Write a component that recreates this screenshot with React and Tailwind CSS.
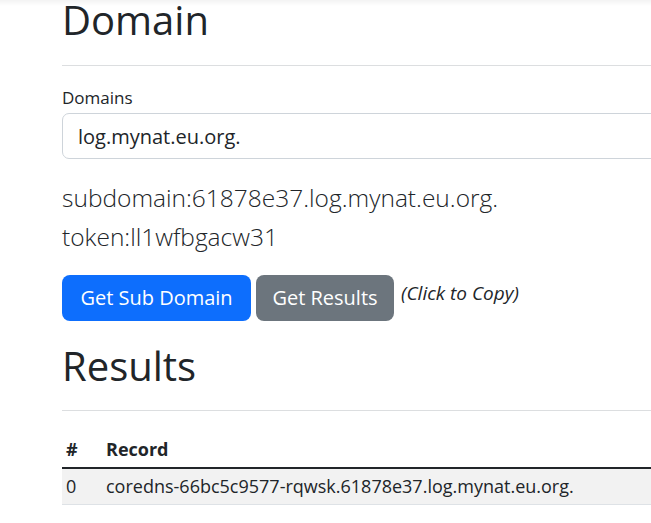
import React from 'react';

const records = [
  { id: 0, value: 'coredns-66bc5c9577-rqwsk.61878e37.log.mynat.eu.org.' },
];

const App = () => {
  return (
    <div className="min-h-screen w-full overflow-hidden bg-white bg-[linear-gradient(to_bottom,#f3f3f3,#ffffff_6px)] font-['Open_Sans',sans-serif] text-[#212529]">
      <div className="ml-[62px] w-[760px]">
        {/* Domain section */}
        <h1 className="text-[40px] leading-[40px] font-normal">Domain</h1>
        <hr className="mt-[25px] border-0 border-t border-[#dcdee0]" />

        <label className="mt-[20px] block text-[17px] leading-[24px]">Domains</label>
        <input
          className="mt-[3px] block h-[46px] w-full rounded-[7px] border border-[#ced4da] bg-white px-[15px] text-[20px] leading-[30px] text-[#212529] outline-none"
          defaultValue="log.mynat.eu.org."
          readOnly
        />

        <div className="mt-[19px] text-[24.5px] leading-[39px] font-light">
          <div>subdomain:61878e37.log.mynat.eu.org.</div>
          <div>token:ll1wfbgacw31</div>
        </div>

        <div className="mt-[19px] flex items-start">
          <button className="flex h-[46px] w-[189px] items-center justify-center rounded-lg bg-[#0d6efd] text-[20px] leading-[30px] text-white">
            Get Sub Domain
          </button>
          <button className="ml-[5px] flex h-[46px] w-[138px] items-center justify-center rounded-lg bg-[#6c757d] text-[20px] leading-[30px] text-white">
            Get Results
          </button>
          <span className="ml-[7px] mt-[6px] text-[19px] leading-[24px] italic">(Click to Copy)</span>
        </div>

        {/* Results section */}
        <h1 className="mt-[25px] text-[40px] leading-[40px] font-normal">Results</h1>
        <hr className="mt-[24px] border-0 border-t border-[#dcdee0]" />

        <table className="mt-[21px] w-full border-collapse text-left text-[18px] leading-[27px]">
          <thead>
            <tr className="border-b-2 border-[#212529]">
              <th className="w-[40px] px-[4px] py-[4px] font-bold">#</th>
              <th className="px-[4px] py-[4px] font-bold">Record</th>
            </tr>
          </thead>
          <tbody>
            {records.map((r) => (
              <tr key={r.id} className="border-b border-[#dee2e6] bg-[#f2f2f2]">
                <td className="px-[4px] py-[4px]">{r.id}</td>
                <td className="px-[4px] py-[4px]">{r.value}</td>
              </tr>
            ))}
          </tbody>
        </table>
      </div>
    </div>
  );
};

export default App;
